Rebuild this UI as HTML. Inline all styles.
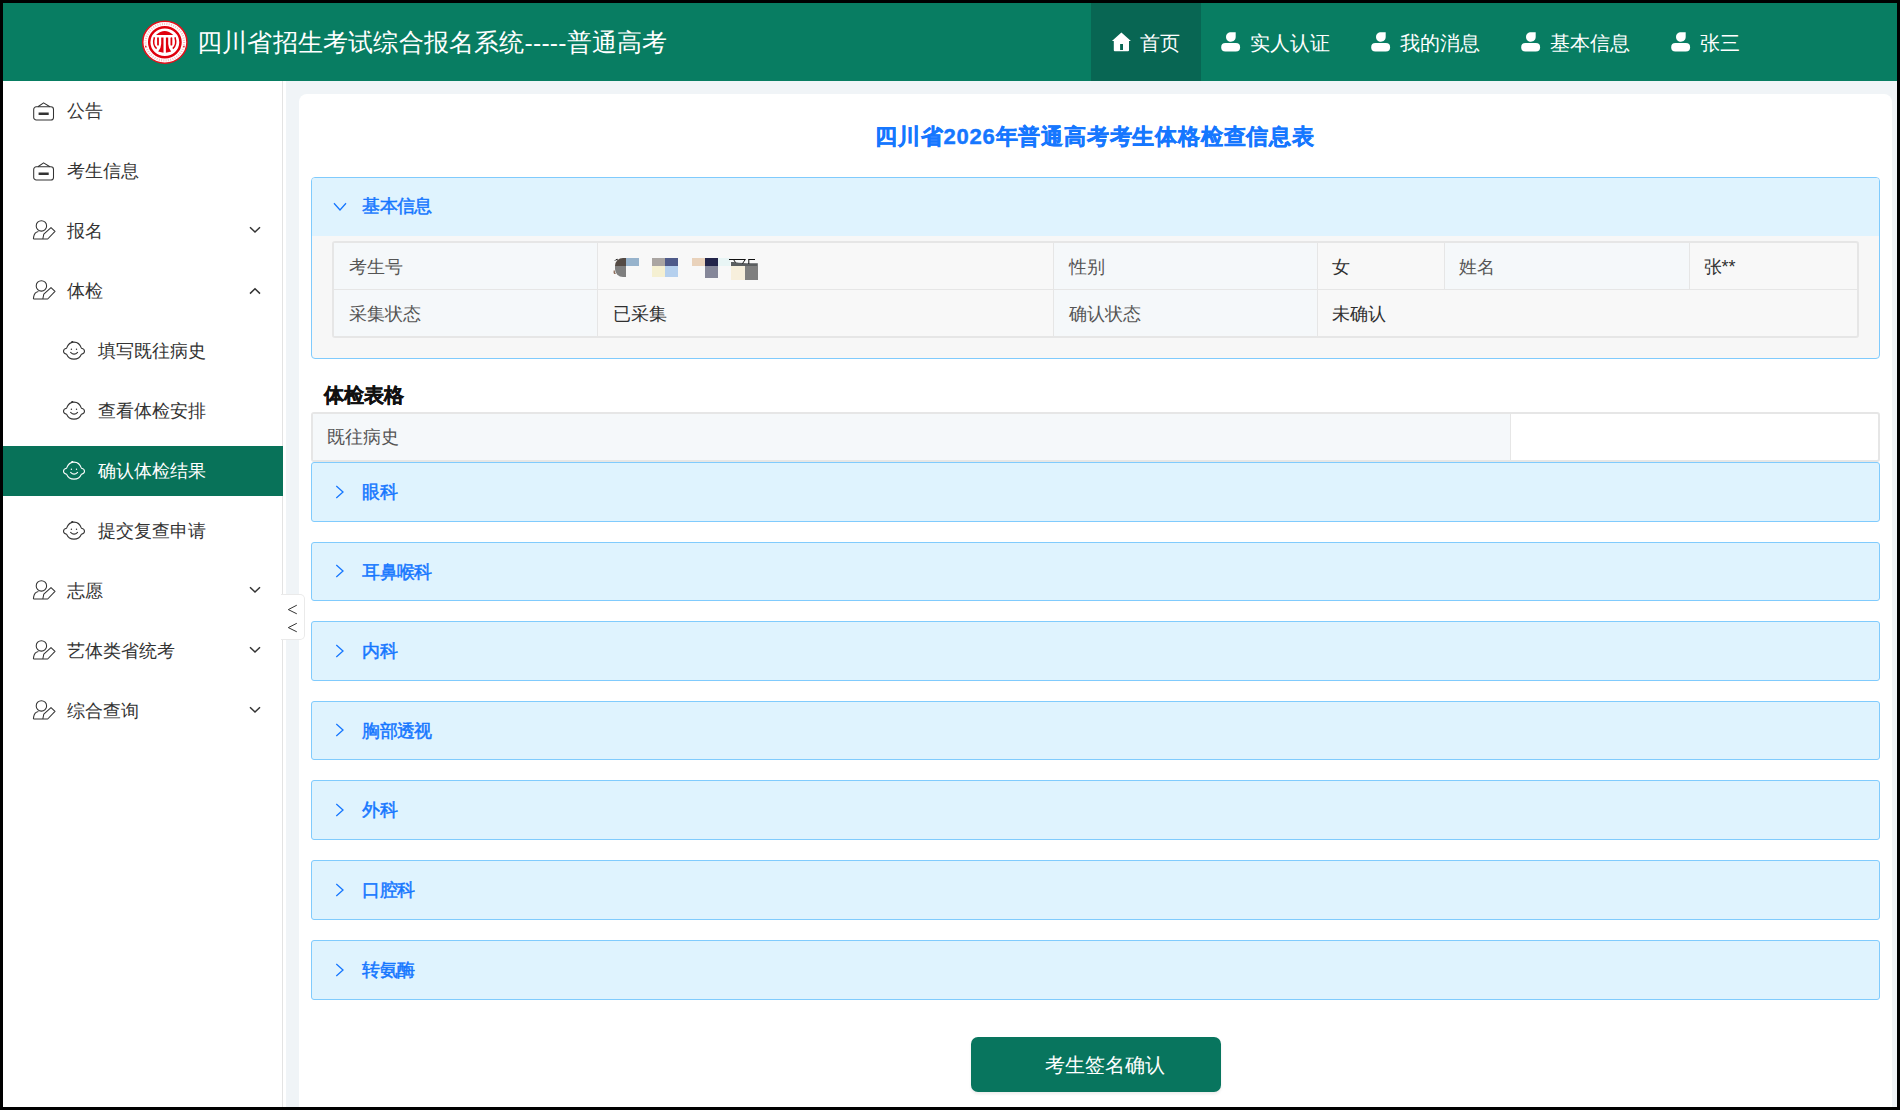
<!DOCTYPE html>
<html><head><meta charset="utf-8">
<style>
*{box-sizing:border-box;margin:0;padding:0}
html,body{width:1901px;height:1110px;overflow:hidden;background:#fff;font-family:"Liberation Sans",sans-serif}
#frame{position:absolute;left:0;top:0;width:1900px;height:1110px;background:#000}
#app{position:absolute;left:3px;top:3px;width:1894px;height:1104px;background:#f0f4f7;overflow:hidden}
.abs{position:absolute}
.t{position:absolute;white-space:nowrap;line-height:1}
/* header */
#hdr{position:absolute;left:0;top:0;width:1894px;height:78px;background:#087d62}
.navact{position:absolute;left:1088px;top:0;width:110px;height:78px;background:#086653}
.nt{color:#fff;font-size:20.4px}
/* sidebar */
#side{position:absolute;left:0;top:78px;width:279px;height:1026px;background:#fff}
#sideline{position:absolute;left:279px;top:78px;width:1px;height:1026px;background:#e3e3e3}
#sidegap{position:absolute;left:280px;top:78px;width:3px;height:1026px;background:#fff}
.mi{color:#333;font-size:18px}
.act{position:absolute;left:0;top:443px;width:280px;height:50px;background:#087259}
/* card */
#card{position:absolute;left:296px;top:91px;width:1593px;height:1100px;background:#fff;border-radius:8px}
.pnl{position:absolute;left:308px;width:1569px;height:59px;background:#dff3fe;border:1px solid #80cbfd;border-radius:3px}
.ph{color:#1677ff;font-size:17.6px;font-weight:normal;letter-spacing:-0.7px;-webkit-text-stroke:0.5px #1677ff}
.lbl{color:#555;font-size:18px}
.val{color:#303030;font-size:18px}
</style></head><body>
<div id="frame"></div>
<div id="app">
  <div id="hdr">
    <svg class="abs" style="left:137px;top:15px" width="56" height="56" viewBox="140 18 56 56">
      <ellipse cx="164.85" cy="42.2" rx="22.1" ry="21.0" fill="#fff" stroke="#e4101a" stroke-width="1.5"/>
      <ellipse cx="164.85" cy="42.2" rx="19.3" ry="18.3" fill="none" stroke="#f6b8ba" stroke-width="2.2" stroke-dasharray="0.9 1.4"/>
      <circle cx="145.8" cy="46.6" r="0.8" fill="#e4101a"/><circle cx="183.9" cy="46.6" r="0.8" fill="#e4101a"/>
      <ellipse cx="164.85" cy="42.2" rx="15.65" ry="15.0" fill="none" stroke="#e0000c" stroke-width="2.5"/>
      <g fill="#e0000c">
      <path d="M156.0 34.9 Q164.7 27.1 173.3 34.9 Z"/>
      <rect x="157.1" y="37.2" width="1.8" height="8.4" rx="0.9"/>
      <rect x="170.5" y="37.2" width="1.8" height="8.4" rx="0.9"/>
      <path d="M161.2 37.5 L163.5 37.5 L163.5 52.8 L158.2 51.4 Q161 48.5 161.2 44 Z"/>
      <path d="M168.2 37.5 L165.9 37.5 L165.9 52.8 L171.2 51.4 Q168.4 48.5 168.2 44 Z"/>
      </g>
      <g fill="none" stroke="#e0000c" stroke-width="1.5"><path d="M154.4 37.3 Q152.2 45 156.6 48.6"/><path d="M175.0 37.3 Q177.2 45 172.8 48.6"/></g>
    </svg>
    <div class="t" id="title" style="left:194px;top:28px;color:#fff;font-size:24.6px;letter-spacing:0.2px">四川省招生考试综合报名系统-----普通高考</div>
    <div class="navact"></div>
    <!-- home -->
    <svg class="abs" style="left:1108px;top:29px" width="20" height="20" viewBox="0 0 20 20">
      <path fill-rule="evenodd" d="M10.4 0.6 L19.9 9.1 L18 9.1 L18 18.2 Q18 19.2 17 19.2 L3.8 19.2 Q2.8 19.2 2.8 18.2 L2.8 9.1 L0.9 9.1 Z M9.1 11.9 L12 11.9 L12 17.9 L9.1 17.9 Z" fill="#fff"/></svg>
    <div class="t nt" style="left:1137px;top:30px">首页</div>
    <svg class="abs usr" style="left:1218px;top:29px" width="20" height="20" viewBox="0 0 20 20"><path d="M14.7 0.2 L14.7 5 C14.7 7.7 12.6 9.7 9.9 9.7 C7.2 9.7 5 7.6 5 4.9 C5 2.2 7.2 0.2 9.9 0.2 Z" fill="#fff"/><rect x="0.2" y="11" width="18.9" height="8.5" rx="4.2" ry="4" fill="#fff"/></svg>
    <div class="t nt" style="left:1247px;top:30px">实人认证</div>
    <svg class="abs usr" style="left:1368px;top:29px" width="20" height="20" viewBox="0 0 20 20"><path d="M14.7 0.2 L14.7 5 C14.7 7.7 12.6 9.7 9.9 9.7 C7.2 9.7 5 7.6 5 4.9 C5 2.2 7.2 0.2 9.9 0.2 Z" fill="#fff"/><rect x="0.2" y="11" width="18.9" height="8.5" rx="4.2" ry="4" fill="#fff"/></svg>
    <div class="t nt" style="left:1397px;top:30px">我的消息</div>
    <svg class="abs usr" style="left:1518px;top:29px" width="20" height="20" viewBox="0 0 20 20"><path d="M14.7 0.2 L14.7 5 C14.7 7.7 12.6 9.7 9.9 9.7 C7.2 9.7 5 7.6 5 4.9 C5 2.2 7.2 0.2 9.9 0.2 Z" fill="#fff"/><rect x="0.2" y="11" width="18.9" height="8.5" rx="4.2" ry="4" fill="#fff"/></svg>
    <div class="t nt" style="left:1547px;top:30px">基本信息</div>
    <svg class="abs usr" style="left:1668px;top:29px" width="20" height="20" viewBox="0 0 20 20"><path d="M14.7 0.2 L14.7 5 C14.7 7.7 12.6 9.7 9.9 9.7 C7.2 9.7 5 7.6 5 4.9 C5 2.2 7.2 0.2 9.9 0.2 Z" fill="#fff"/><rect x="0.2" y="11" width="18.9" height="8.5" rx="4.2" ry="4" fill="#fff"/></svg>
    <div class="t nt" style="left:1697px;top:30px">张三</div>
  </div>

  <div id="side"></div>
  <div id="sideline"></div>
  <div id="sidegap"></div>
  <div class="act"></div>
  <svg class="abs" style="left:29px;top:97.7px" width="24" height="22" viewBox="0 0 24 22"><g fill="none" stroke="#333" stroke-width="1.05" stroke-linejoin="round"><path d="M5.9 5.8 L11.6 1.9 L17.9 5.8"/><rect x="1.7" y="5.8" width="19.8" height="13.2" rx="2.6"/></g><rect x="6.6" y="11.5" width="10.1" height="2.5" fill="#333"/></svg>
<div class="t mi" style="left:63.8px;top:98.5px;color:#333">公告</div>
<svg class="abs" style="left:29px;top:157.7px" width="24" height="22" viewBox="0 0 24 22"><g fill="none" stroke="#333" stroke-width="1.05" stroke-linejoin="round"><path d="M5.9 5.8 L11.6 1.9 L17.9 5.8"/><rect x="1.7" y="5.8" width="19.8" height="13.2" rx="2.6"/></g><rect x="6.6" y="11.5" width="10.1" height="2.5" fill="#333"/></svg>
<div class="t mi" style="left:63.8px;top:158.5px;color:#333">考生信息</div>
<svg class="abs" style="left:29px;top:215.3px" width="26" height="26" viewBox="0 0 26 26"><g fill="none" stroke="#333" stroke-width="1.05" stroke-linejoin="round"><circle cx="9.4" cy="7.9" r="5.2"/><path d="M1.4 21 L1.7 18.6 Q2.4 14.4 6.4 13.5"/><path d="M1.4 21 L15.7 21 L23 13.3 L19 9.6 L11.8 16.2 L10.8 21"/></g></svg>
<div class="t mi" style="left:63.8px;top:218.5px;color:#333">报名</div>
<svg class="abs" style="left:245.5px;top:223.1px" width="12" height="8" viewBox="0 0 12 8"><path d="M1 1.2 L6 6 L11 1.2" fill="none" stroke="#333" stroke-width="1.5"/></svg>
<svg class="abs" style="left:29px;top:275.3px" width="26" height="26" viewBox="0 0 26 26"><g fill="none" stroke="#333" stroke-width="1.05" stroke-linejoin="round"><circle cx="9.4" cy="7.9" r="5.2"/><path d="M1.4 21 L1.7 18.6 Q2.4 14.4 6.4 13.5"/><path d="M1.4 21 L15.7 21 L23 13.3 L19 9.6 L11.8 16.2 L10.8 21"/></g></svg>
<div class="t mi" style="left:63.8px;top:278.5px;color:#333">体检</div>
<svg class="abs" style="left:245.5px;top:284.0px" width="12" height="8" viewBox="0 0 12 8"><path d="M1 6.6 L6 1.8 L11 6.6" fill="none" stroke="#333" stroke-width="1.5"/></svg>
<svg class="abs" style="left:59px;top:337.0px" width="24" height="22" viewBox="0 0 24 22"><g fill="none" stroke="#333" stroke-width="1.05" stroke-linejoin="round" stroke-linecap="round"><path d="M4.6 8.2 C6 4 9 2.1 12 2.1 C15 2.1 18 4 19.4 8.2 C21.6 8.6 22.5 9.8 22.5 11.2 C22.5 12.6 21.6 13.8 19.4 14.2 C18 17.6 15.2 19.1 12 19.1 C8.8 19.1 6 17.6 4.6 14.2 C2.4 13.8 1.5 12.6 1.5 11.2 C1.5 9.8 2.4 8.6 4.6 8.2 Z"/><path d="M9.6 2.7 Q9.4 1.3 10.9 1.5"/><path d="M8.6 12.3 Q12.1 15.9 15.6 12.3"/></g><circle cx="9.4" cy="9.3" r="0.7" fill="#333"/><circle cx="14.5" cy="9.3" r="0.7" fill="#333"/></svg>
<div class="t mi" style="left:94.7px;top:338.5px;color:#333">填写既往病史</div>
<svg class="abs" style="left:59px;top:397.0px" width="24" height="22" viewBox="0 0 24 22"><g fill="none" stroke="#333" stroke-width="1.05" stroke-linejoin="round" stroke-linecap="round"><path d="M4.6 8.2 C6 4 9 2.1 12 2.1 C15 2.1 18 4 19.4 8.2 C21.6 8.6 22.5 9.8 22.5 11.2 C22.5 12.6 21.6 13.8 19.4 14.2 C18 17.6 15.2 19.1 12 19.1 C8.8 19.1 6 17.6 4.6 14.2 C2.4 13.8 1.5 12.6 1.5 11.2 C1.5 9.8 2.4 8.6 4.6 8.2 Z"/><path d="M9.6 2.7 Q9.4 1.3 10.9 1.5"/><path d="M8.6 12.3 Q12.1 15.9 15.6 12.3"/></g><circle cx="9.4" cy="9.3" r="0.7" fill="#333"/><circle cx="14.5" cy="9.3" r="0.7" fill="#333"/></svg>
<div class="t mi" style="left:94.7px;top:398.5px;color:#333">查看体检安排</div>
<svg class="abs" style="left:59px;top:457.0px" width="24" height="22" viewBox="0 0 24 22"><g fill="none" stroke="#fff" stroke-width="1.05" stroke-linejoin="round" stroke-linecap="round"><path d="M4.6 8.2 C6 4 9 2.1 12 2.1 C15 2.1 18 4 19.4 8.2 C21.6 8.6 22.5 9.8 22.5 11.2 C22.5 12.6 21.6 13.8 19.4 14.2 C18 17.6 15.2 19.1 12 19.1 C8.8 19.1 6 17.6 4.6 14.2 C2.4 13.8 1.5 12.6 1.5 11.2 C1.5 9.8 2.4 8.6 4.6 8.2 Z"/><path d="M9.6 2.7 Q9.4 1.3 10.9 1.5"/><path d="M8.6 12.3 Q12.1 15.9 15.6 12.3"/></g><circle cx="9.4" cy="9.3" r="0.7" fill="#fff"/><circle cx="14.5" cy="9.3" r="0.7" fill="#fff"/></svg>
<div class="t mi" style="left:94.7px;top:458.5px;color:#fff">确认体检结果</div>
<svg class="abs" style="left:59px;top:517.0px" width="24" height="22" viewBox="0 0 24 22"><g fill="none" stroke="#333" stroke-width="1.05" stroke-linejoin="round" stroke-linecap="round"><path d="M4.6 8.2 C6 4 9 2.1 12 2.1 C15 2.1 18 4 19.4 8.2 C21.6 8.6 22.5 9.8 22.5 11.2 C22.5 12.6 21.6 13.8 19.4 14.2 C18 17.6 15.2 19.1 12 19.1 C8.8 19.1 6 17.6 4.6 14.2 C2.4 13.8 1.5 12.6 1.5 11.2 C1.5 9.8 2.4 8.6 4.6 8.2 Z"/><path d="M9.6 2.7 Q9.4 1.3 10.9 1.5"/><path d="M8.6 12.3 Q12.1 15.9 15.6 12.3"/></g><circle cx="9.4" cy="9.3" r="0.7" fill="#333"/><circle cx="14.5" cy="9.3" r="0.7" fill="#333"/></svg>
<div class="t mi" style="left:94.7px;top:518.5px;color:#333">提交复查申请</div>
<svg class="abs" style="left:29px;top:575.3px" width="26" height="26" viewBox="0 0 26 26"><g fill="none" stroke="#333" stroke-width="1.05" stroke-linejoin="round"><circle cx="9.4" cy="7.9" r="5.2"/><path d="M1.4 21 L1.7 18.6 Q2.4 14.4 6.4 13.5"/><path d="M1.4 21 L15.7 21 L23 13.3 L19 9.6 L11.8 16.2 L10.8 21"/></g></svg>
<div class="t mi" style="left:63.8px;top:578.5px;color:#333">志愿</div>
<svg class="abs" style="left:245.5px;top:583.1px" width="12" height="8" viewBox="0 0 12 8"><path d="M1 1.2 L6 6 L11 1.2" fill="none" stroke="#333" stroke-width="1.5"/></svg>
<svg class="abs" style="left:29px;top:635.3px" width="26" height="26" viewBox="0 0 26 26"><g fill="none" stroke="#333" stroke-width="1.05" stroke-linejoin="round"><circle cx="9.4" cy="7.9" r="5.2"/><path d="M1.4 21 L1.7 18.6 Q2.4 14.4 6.4 13.5"/><path d="M1.4 21 L15.7 21 L23 13.3 L19 9.6 L11.8 16.2 L10.8 21"/></g></svg>
<div class="t mi" style="left:63.8px;top:638.5px;color:#333">艺体类省统考</div>
<svg class="abs" style="left:245.5px;top:643.1px" width="12" height="8" viewBox="0 0 12 8"><path d="M1 1.2 L6 6 L11 1.2" fill="none" stroke="#333" stroke-width="1.5"/></svg>
<svg class="abs" style="left:29px;top:695.3px" width="26" height="26" viewBox="0 0 26 26"><g fill="none" stroke="#333" stroke-width="1.05" stroke-linejoin="round"><circle cx="9.4" cy="7.9" r="5.2"/><path d="M1.4 21 L1.7 18.6 Q2.4 14.4 6.4 13.5"/><path d="M1.4 21 L15.7 21 L23 13.3 L19 9.6 L11.8 16.2 L10.8 21"/></g></svg>
<div class="t mi" style="left:63.8px;top:698.5px;color:#333">综合查询</div>
<svg class="abs" style="left:245.5px;top:703.1px" width="12" height="8" viewBox="0 0 12 8"><path d="M1 1.2 L6 6 L11 1.2" fill="none" stroke="#333" stroke-width="1.5"/></svg>

  <div id="card"></div>
  <div class="t" id="ptitle" style="left:872px;top:123px;color:#1677ff;font-size:22px;letter-spacing:0.8px;font-weight:bold;-webkit-text-stroke:0.45px #1677ff">四川省2026年普通高考考生体格检查信息表</div>
<div class="abs" style="left:308px;top:174px;width:1569px;height:182px;background:#f7f7f7;border:1px solid #80cbfd;border-radius:4px;overflow:hidden"><div class="abs" style="left:0;top:0;width:1567px;height:58px;background:#dff3fe"></div></div>
<svg class="abs" style="left:329.5px;top:199.3px" width="14" height="10" viewBox="0 0 14 10"><path d="M1 1.3 L7 8 L13 1.3" fill="none" stroke="#1677ff" stroke-width="1.3"/></svg>
<div class="t ph" style="left:359.3px;top:195.4px">基本信息</div>
<div class="abs" style="left:329px;top:238px;width:1527px;height:97px;border:2px solid #e6e6e6;border-radius:3px;background:#f8f8f8;overflow:hidden"></div>
<div class="abs" style="left:331px;top:240px;width:263px;height:46px;background:#f5f8fa"></div>
<div class="abs" style="left:1051px;top:240px;width:263px;height:46px;background:#f5f8fa"></div>
<div class="abs" style="left:1442px;top:240px;width:244px;height:46px;background:#f5f8fa"></div>
<div class="abs" style="left:331px;top:287px;width:263px;height:46px;background:#f5f8fa"></div>
<div class="abs" style="left:1051px;top:287px;width:263px;height:46px;background:#f5f8fa"></div>
<div class="abs" style="left:594px;top:240px;width:1px;height:93px;background:#e6e6e6"></div>
<div class="abs" style="left:1050px;top:240px;width:1px;height:93px;background:#e6e6e6"></div>
<div class="abs" style="left:1314px;top:240px;width:1px;height:93px;background:#e6e6e6"></div>
<div class="abs" style="left:1441px;top:240px;width:1px;height:46px;background:#e6e6e6"></div>
<div class="abs" style="left:1686px;top:240px;width:1px;height:46px;background:#e6e6e6"></div>
<div class="abs" style="left:331px;top:286px;width:1523px;height:1px;background:#e6e6e6"></div>
<div class="t lbl" style="left:346px;top:254.5px">考生号</div>
<div class="t lbl" style="left:1066px;top:254.5px">性别</div>
<div class="t val" style="left:1329px;top:254.5px">女</div>
<div class="t lbl" style="left:1456px;top:254.5px">姓名</div>
<div class="t val" style="left:1700.5px;top:254.5px">张**</div>
<div class="t lbl" style="left:346px;top:301.5px">采集状态</div>
<div class="t val" style="left:610px;top:301.5px">已采集</div>
<div class="t lbl" style="left:1066px;top:301.5px">确认状态</div>
<div class="t val" style="left:1329px;top:301.5px">未确认</div>
<div class="abs" style="left:611.7px;top:254.6px;width:11.2px;height:8.1px;background:#544a44;border-top-left-radius:8px 8px"></div>
<div class="abs" style="left:611.7px;top:262.7px;width:11.2px;height:11.7px;background:#7f7f7f;border-bottom-left-radius:8px 8px"></div>
<div class="abs" style="left:622.9px;top:254.6px;width:13.0px;height:8.1px;background:#97b3cc;"></div>
<div class="abs" style="left:649.1px;top:254.6px;width:12.9px;height:8.1px;background:#aaa5a2;"></div>
<div class="abs" style="left:662px;top:254.6px;width:12.9px;height:8.1px;background:#4f5b8a;"></div>
<div class="abs" style="left:649.1px;top:262.7px;width:12.9px;height:11.7px;background:#f5f0d2;"></div>
<div class="abs" style="left:662px;top:262.7px;width:12.9px;height:11.7px;background:#b5d0ee;"></div>
<div class="abs" style="left:689.1px;top:254.6px;width:12.9px;height:8.1px;background:#e9d2bb;"></div>
<div class="abs" style="left:702px;top:254.6px;width:12.8px;height:8.1px;background:#23254a;"></div>
<div class="abs" style="left:702px;top:262.7px;width:12.8px;height:12.5px;background:#858799;"></div>
<div class="abs" style="left:714.8px;top:255px;width:12.2px;height:7.7px;background:#e8f5f5;"></div>
<div class="abs" style="left:727.8px;top:258.5px;width:27.0px;height:4.5px;background:#5b5e60;clip-path:polygon(0 0,30% 25%,60% 40%,100% 40%,100% 100%,0 100%)"></div>
<div class="abs" style="left:727.8px;top:263px;width:14.3px;height:13.9px;background:#f7efdc;"></div>
<div class="abs" style="left:742.1px;top:263px;width:12.7px;height:13.9px;background:#7f7f7f;"></div>
<svg class="abs" style="left:597px;top:247px" width="170" height="35" viewBox="600 250 170 35"><g fill="none" stroke="#111" stroke-width="1"><path d="M729 259.5 L745.5 259.5 M748.3 259.5 L755 259.5 M733.5 259.5 L735.5 262.5 M745.3 259.5 L742.5 263.5 M748.8 259.5 L748.8 264"/><path d="M614.8 260.8 Q615.5 259.3 617.8 259.3" stroke-width="0.9"/><path d="M614.2 270.5 L614.2 273.3 L615.6 273.3" stroke="#5a2a10" stroke-width="0.9"/></g></svg>
<div class="t" style="left:320.5px;top:382px;color:#111;font-size:20px;font-weight:bold;-webkit-text-stroke:0.4px #111">体检表格</div>
<div class="abs" style="left:308px;top:409px;width:1569px;height:50px;border:2px solid #e6e6e6;border-radius:3px;background:#fff;overflow:hidden"><div class="abs" style="left:0;top:0;width:1198px;height:46px;background:#f5f8fa;border-right:1px solid #e6e6e6"></div></div>
<div class="t lbl" style="left:324px;top:425.3px">既往病史</div>
<div class="pnl" style="top:459px;height:60px"></div>
<svg class="abs" style="left:331.5px;top:481.9px" width="10" height="14" viewBox="0 0 10 14"><path d="M1.3 1 L8 7 L1.3 13" fill="none" stroke="#1677ff" stroke-width="1.3"/></svg>
<div class="t ph" style="left:359.3px;top:481.1px">眼科</div>
<div class="pnl" style="top:539px;height:59px"></div>
<svg class="abs" style="left:331.5px;top:561.4px" width="10" height="14" viewBox="0 0 10 14"><path d="M1.3 1 L8 7 L1.3 13" fill="none" stroke="#1677ff" stroke-width="1.3"/></svg>
<div class="t ph" style="left:359.3px;top:560.6px">耳鼻喉科</div>
<div class="pnl" style="top:618px;height:60px"></div>
<svg class="abs" style="left:331.5px;top:640.9px" width="10" height="14" viewBox="0 0 10 14"><path d="M1.3 1 L8 7 L1.3 13" fill="none" stroke="#1677ff" stroke-width="1.3"/></svg>
<div class="t ph" style="left:359.3px;top:640.1px">内科</div>
<div class="pnl" style="top:698px;height:59px"></div>
<svg class="abs" style="left:331.5px;top:720.4px" width="10" height="14" viewBox="0 0 10 14"><path d="M1.3 1 L8 7 L1.3 13" fill="none" stroke="#1677ff" stroke-width="1.3"/></svg>
<div class="t ph" style="left:359.3px;top:719.6px">胸部透视</div>
<div class="pnl" style="top:777px;height:60px"></div>
<svg class="abs" style="left:331.5px;top:799.9px" width="10" height="14" viewBox="0 0 10 14"><path d="M1.3 1 L8 7 L1.3 13" fill="none" stroke="#1677ff" stroke-width="1.3"/></svg>
<div class="t ph" style="left:359.3px;top:799.1px">外科</div>
<div class="pnl" style="top:857px;height:60px"></div>
<svg class="abs" style="left:331.5px;top:879.9px" width="10" height="14" viewBox="0 0 10 14"><path d="M1.3 1 L8 7 L1.3 13" fill="none" stroke="#1677ff" stroke-width="1.3"/></svg>
<div class="t ph" style="left:359.3px;top:879.1px">口腔科</div>
<div class="pnl" style="top:937px;height:60px"></div>
<svg class="abs" style="left:331.5px;top:959.9px" width="10" height="14" viewBox="0 0 10 14"><path d="M1.3 1 L8 7 L1.3 13" fill="none" stroke="#1677ff" stroke-width="1.3"/></svg>
<div class="t ph" style="left:359.3px;top:959.1px">转氨酶</div>
<div class="abs" style="left:968px;top:1034px;width:250px;height:55px;background:#08755e;border-radius:7px;box-shadow:0 2px 3px rgba(0,0,0,0.08)"></div>
<div class="t" style="left:1042px;top:1052px;color:#fff;font-size:20px">考生签名确认</div>
<div class="abs" style="left:278px;top:591px;width:24px;height:46px;background:#fff;border:1px solid #eaeaea;border-left:none;border-radius:0 5px 5px 0"></div>
<svg class="abs" style="left:284px;top:601px" width="11" height="30" viewBox="0 0 11 30"><g fill="none" stroke="#333" stroke-width="1.0"><path d="M9.8 1.2 L1.3 5.6 L9.8 9.8"/><path d="M9.8 19.3 L1.3 23.6 L9.8 27.8"/></g></svg>
</div>
<div class="abs" style="left:1900px;top:0;width:1px;height:1110px;background:#fff"></div>
</body></html>
